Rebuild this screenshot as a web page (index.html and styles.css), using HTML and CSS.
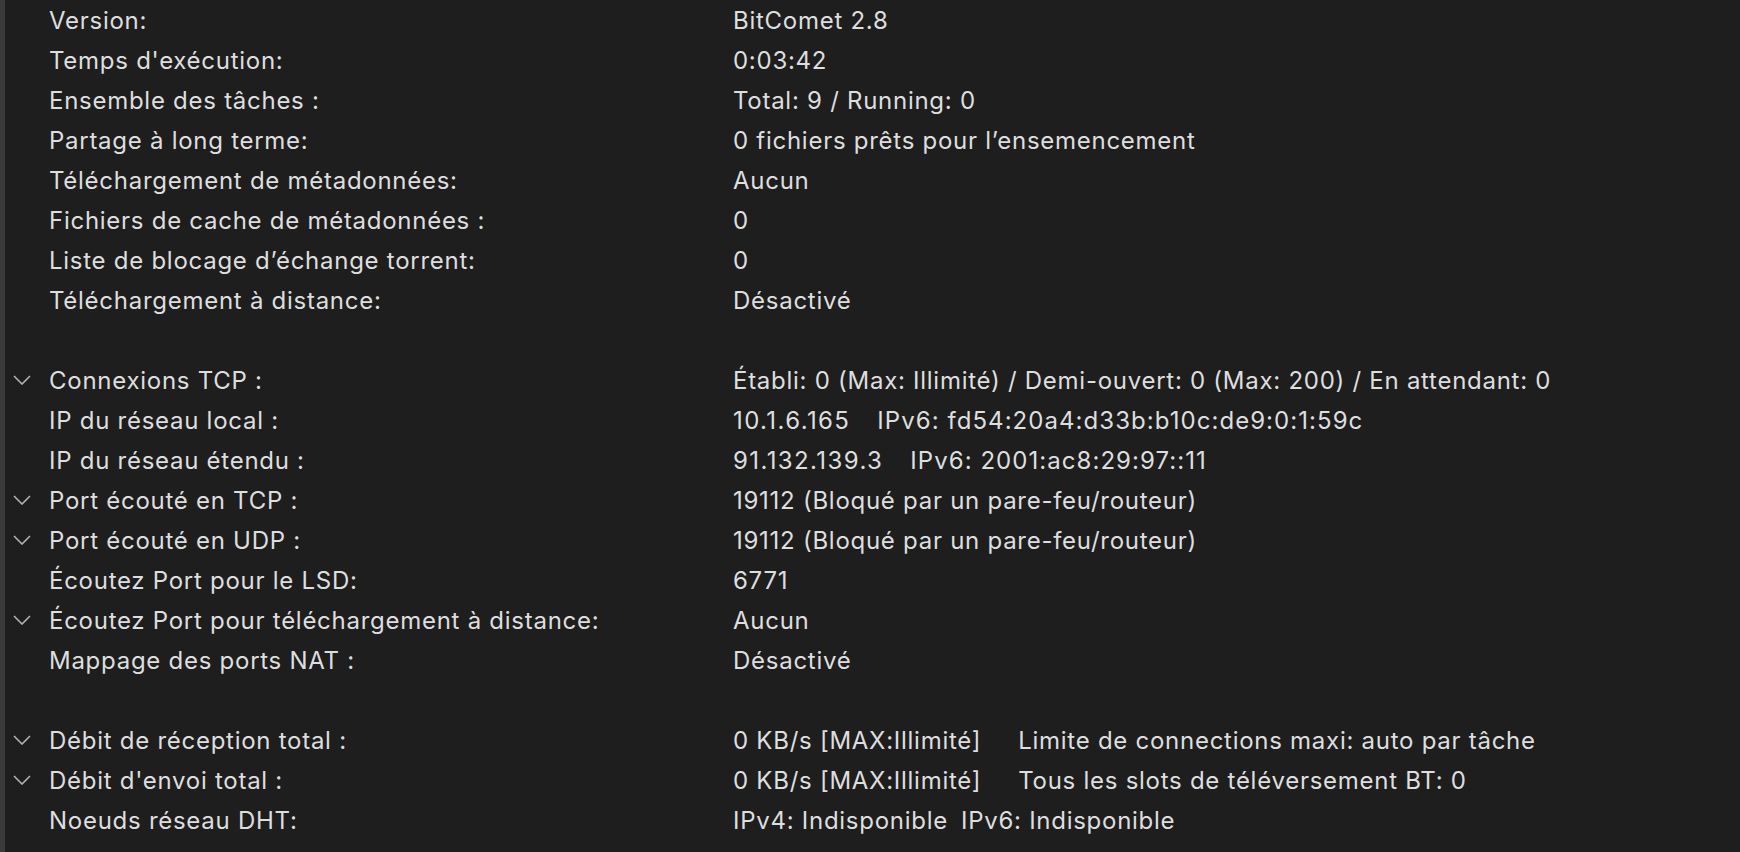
FILE: index.html
```html
<!DOCTYPE html>
<html lang="fr">
<head>
<meta charset="utf-8">
<title>BitComet</title>
<link rel="stylesheet" href="styles.css">
</head>
<body>
<div class="panel">
  <div class="row"><span class="chev"></span><span class="label">Version:</span><span class="value">BitComet 2.8</span></div>
  <div class="row"><span class="chev"></span><span class="label">Temps d'exécution:</span><span class="value">0:03:42</span></div>
  <div class="row"><span class="chev"></span><span class="label">Ensemble des tâches :</span><span class="value">Total: 9 / Running: 0</span></div>
  <div class="row"><span class="chev"></span><span class="label">Partage à long terme:</span><span class="value">0 fichiers prêts pour l’ensemencement</span></div>
  <div class="row"><span class="chev"></span><span class="label">Téléchargement de métadonnées:</span><span class="value">Aucun</span></div>
  <div class="row"><span class="chev"></span><span class="label">Fichiers de cache de métadonnées :</span><span class="value">0</span></div>
  <div class="row"><span class="chev"></span><span class="label">Liste de blocage d’échange torrent:</span><span class="value">0</span></div>
  <div class="row"><span class="chev"></span><span class="label">Téléchargement à distance:</span><span class="value">Désactivé</span></div>
  <div class="row blank"></div>
  <div class="row"><span class="chev"><svg viewBox="0 0 18 10" width="18" height="10"><path d="M1 1 L9 9 L17 1" fill="none" stroke="#b4b4b4" stroke-width="1.6"/></svg></span><span class="label">Connexions TCP :</span><span class="value">Établi: 0 (Max: Illimité) / Demi-ouvert: 0 (Max: 200) / En attendant: 0</span></div>
  <div class="row"><span class="chev"></span><span class="label">IP du réseau local :</span><span class="value"><span class="seg num">10.1.6.165</span><span class="seg ip6">IPv6: fd54:20a4:d33b:b10c:de9:0:1:59c</span></span></div>
  <div class="row"><span class="chev"></span><span class="label">IP du réseau étendu :</span><span class="value"><span class="seg num">91.132.139.3</span><span class="seg ip6">IPv6: 2001:ac8:29:97::11</span></span></div>
  <div class="row"><span class="chev"><svg viewBox="0 0 18 10" width="18" height="10"><path d="M1 1 L9 9 L17 1" fill="none" stroke="#b4b4b4" stroke-width="1.6"/></svg></span><span class="label">Port écouté en TCP :</span><span class="value">19112 (Bloqué par un pare-feu/routeur)</span></div>
  <div class="row"><span class="chev"><svg viewBox="0 0 18 10" width="18" height="10"><path d="M1 1 L9 9 L17 1" fill="none" stroke="#b4b4b4" stroke-width="1.6"/></svg></span><span class="label">Port écouté en UDP :</span><span class="value">19112 (Bloqué par un pare-feu/routeur)</span></div>
  <div class="row"><span class="chev"></span><span class="label">Écoutez Port pour le LSD:</span><span class="value">6771</span></div>
  <div class="row"><span class="chev"><svg viewBox="0 0 18 10" width="18" height="10"><path d="M1 1 L9 9 L17 1" fill="none" stroke="#b4b4b4" stroke-width="1.6"/></svg></span><span class="label">Écoutez Port pour téléchargement à distance:</span><span class="value">Aucun</span></div>
  <div class="row"><span class="chev"></span><span class="label">Mappage des ports NAT :</span><span class="value">Désactivé</span></div>
  <div class="row blank"></div>
  <div class="row"><span class="chev"><svg viewBox="0 0 18 10" width="18" height="10"><path d="M1 1 L9 9 L17 1" fill="none" stroke="#b4b4b4" stroke-width="1.6"/></svg></span><span class="label">Débit de réception total :</span><span class="value"><span class="seg wide">0 KB/s [MAX:Illimité]</span><span class="seg">Limite de connections maxi: auto par tâche</span></span></div>
  <div class="row"><span class="chev"><svg viewBox="0 0 18 10" width="18" height="10"><path d="M1 1 L9 9 L17 1" fill="none" stroke="#b4b4b4" stroke-width="1.6"/></svg></span><span class="label">Débit d'envoi total :</span><span class="value"><span class="seg wide">0 KB/s [MAX:Illimité]</span><span class="seg">Tous les slots de téléversement BT: 0</span></span></div>
  <div class="row"><span class="chev"></span><span class="label">Noeuds réseau DHT:</span><span class="value"><span class="seg narrow">IPv4: Indisponible</span><span class="seg">IPv6: Indisponible</span></span></div>
</div>
</body>
</html>
```

FILE: styles.css
```css
html, body {
  margin: 0;
  padding: 0;
  background: #1e1e1e;
}
body {
  width: 1740px;
  height: 852px;
  overflow: hidden;
  font-family: Inter, "Liberation Sans", Arial, sans-serif;
  font-size: 24px;
  letter-spacing: 0.73px;
  color: #dedede;
}
.panel {
  height: 852px;
  border-left: 5px solid #3a3a3a;
  box-sizing: border-box;
}
.row {
  display: flex;
  align-items: center;
  height: 40px;
}
.chev {
  width: 44px;
  flex: 0 0 44px;
  display: flex;
  justify-content: flex-start;
  padding-left: 8px;
  box-sizing: border-box;
}
.chev svg { display: block; }
.label {
  flex: 0 0 684px;
  white-space: nowrap;
}
.value {
  white-space: nowrap;
  display: flex;
}
.seg { margin-right: 28px; }
.seg.num { letter-spacing: 1.4px; margin-right: 27px; }
.seg.ip6 { letter-spacing: 1.05px; }
.seg.wide { margin-right: 37px; }
.seg.narrow { margin-right: 13px; }
```
